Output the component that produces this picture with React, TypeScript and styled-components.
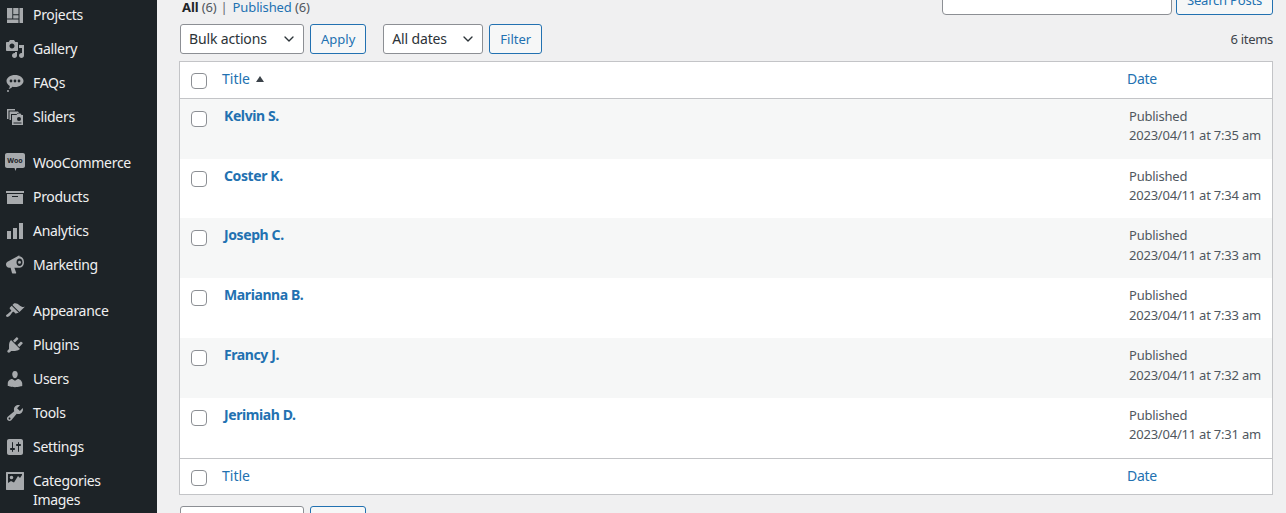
import React from 'react'
import styled, { createGlobalStyle } from 'styled-components'
import { ChevronDown } from 'lucide-react'

const FONT = '"Noto Sans", "Open Sans", sans-serif'

const GlobalStyle = createGlobalStyle`
  html, body {
    margin: 0;
    padding: 0;
    height: 513px;
    overflow: hidden;
    background: #f0f0f1;
    font-family: ${FONT};
  }
  * {
    box-sizing: border-box;
  }
`

const WooLabel = styled.text`
  font-family: ${FONT};
  font-size: 7px;
  font-weight: 700;
  fill: #1d2327;
`

type MenuItem = {
  label: string
  icon: React.ReactNode
}

const icons = {
  projects: (
    <path d="M2 3h5.300v10.500H2zM8.200 3h5.300v6.300H8.200zM8.200 10.200h5.300v3.300H8.200zM2 14.500h11.500V18H2zM14.500 3H18v15h-3.500z" />
  ),
  gallery: (
    <path d="M13 11V4c0-.55-.45-1-1-1h-1.670L9 1H5L3.670 3H2c-.55 0-1 .45-1 1v7c0 .55.45 1 1 1h10c.55 0 1-.45 1-1zM7 4.500c1.380 0 2.500 1.120 2.500 2.500S8.380 9.500 7 9.500 4.500 8.380 4.500 7 5.620 4.500 7 4.500zM14 6h5v10.500c0 1.380-1.120 2.500-2.500 2.500S14 17.880 14 16.500s1.120-2.500 2.500-2.500c.17 0 .34.02.5.05V9h-3V6zm-4 8.050V13h2v3.500c0 1.380-1.120 2.500-2.500 2.500S7 17.880 7 16.500 8.120 14 9.500 14c.17 0 .34.02.5.05z" />
  ),
  faqs: (
    <path
      fillRule="evenodd"
      d="M10 2c4.700 0 8.500 2.700 8.500 6s-3.800 6-8.500 6c-.9 0-1.800-.1-2.600-.3C6.200 15 5 15.800 3.600 16c.8-.9 1.200-2 1.200-3.100C2.900 11.800 1.500 10 1.500 8c0-3.300 3.800-6 8.500-6zM6 6.600a1.400 1.400 0 1 0 0 2.800 1.400 1.400 0 0 0 0-2.800zm4 0a1.400 1.400 0 1 0 0 2.800 1.400 1.400 0 0 0 0-2.800zm4 0a1.400 1.400 0 1 0 0 2.800 1.400 1.400 0 0 0 0-2.800zM3 17a1 1 0 1 1 0 2 1 1 0 0 1 0-2z"
    />
  ),
  sliders: (
    <path
      fillRule="evenodd"
      d="M2 2h8v1.500H3.500V12H2zM4.500 4.500H13l1 1.500H12v1H6v6H4.500zM7 8h4.500l1-1.500h3l1 1.500H18v10H7zm7 2a2 2 0 1 0 0 4 2 2 0 0 0 0-4zM8.500 15.500v1H16.500v-1z"
    />
  ),
  products: <path fillRule="evenodd" d="M19 4v2H1V4h18zM2 7h16v10H2V7zm11 3V9H7v1h6z" />,
  analytics: <path d="M18 18V2h-4v16h4zm-6 0V7H8v11h4zm-6 0v-8H2v8h4z" />,
  marketing: (
    <path
      fillRule="evenodd"
      d="M14.500 1.500c2.800 0 4.500 2.700 4.500 5.800 0 2.900-1.700 5.400-4.300 5.400H9.400l1.800 5.100c.1.300-.1.700-.5.700H7.600c-.3 0-.5-.2-.6-.5l-1.400-5.300H4.200c-1.800 0-3.200-1.500-3.200-3.300 0-1.500 1-2.800 2.400-3.200l8.800-4.800c.7-.6 1.500-.9 2.300-.9zm0 2c-1.800 0-3 1.700-3 3.800s1.200 3.800 3 3.800 3-1.700 3-3.800-1.200-3.800-3-3.800zm0 2.300a1.500 1.500 0 1 1 0 3 1.500 1.500 0 0 1 0-3z"
    />
  ),
  appearance: (
    <path d="M14.480 11.060L7.410 3.990l1.500-1.500c.5-.56 2.300-.47 3.510.32 1.210.8 1.430 1.280 2.910 2.100 1.180.64 2.450 1.260 4.450.85zm-.71.71L6.700 4.700 4.930 6.470c-.39.39-.39 1.020 0 1.410l1.060 1.060c.39.39.39 1.030 0 1.420-.6.6-1.430 1.150-2.210 1.690-.35.24-.7.53-1.010.84C1.430 13.230.4 14.750 1.400 15.600c.99 1.050 2.420 0 3.760-1.330.28-.28.55-.63.81-.98.58-.78 1.090-1.610 1.690-2.210.39-.39 1.030-.39 1.420 0l1.060 1.060c.39.39 1.020.39 1.410 0z" />
  ),
  plugins: (
    <path d="M13.110 4.360L9.870 7.600 8 5.730l3.240-3.240c.35-.34 1.050-.2 1.560.32.52.51.66 1.210.31 1.550zm-8 1.770l.91-1.120 9.010 9.010-1.190.84c-.71.71-2.630 1.160-3.820 1.160H6.140L4.900 17.260c-.59.59-1.540.59-2.120 0-.59-.58-.59-1.530 0-2.120l1.240-1.240v-3.880c0-1.130.4-3.190 1.090-3.890zm7.260 3.970l3.240-3.240c.34-.35 1.040-.21 1.550.31.52.51.66 1.210.31 1.550l-3.240 3.250z" />
  ),
  users: (
    <path d="M10 9.250c-2.270 0-2.730-3.440-2.730-3.440C7 4.020 7.820 2 9.970 2c2.160 0 2.980 2.020 2.710 3.810 0 0-.41 3.440-2.680 3.440zm0 2.570L12.720 10c2.390 0 4.520 2.330 4.520 4.530v2.490s-3.650 1.130-7.240 1.130c-3.650 0-7.240-1.130-7.240-1.130v-2.490c0-2.250 1.940-4.480 4.470-4.480z" />
  ),
  tools: (
    <path d="M16.680 9.770c-1.340 1.340-3.300 1.670-4.950.99l-5.410 6.520c-.99.99-2.590.99-3.580 0s-.99-2.590 0-3.570l6.520-5.420c-.68-1.650-.35-3.610.99-4.950 1.280-1.280 3.120-1.620 4.720-1.060l-2.890 2.890 2.820 2.820 2.860-2.870c.53 1.580.18 3.390-1.080 4.650zM3.810 16.210c.4.39 1.040.39 1.430 0 .4-.4.4-1.040 0-1.430-.39-.4-1.030-.4-1.430 0-.39.39-.39 1.030 0 1.430z" />
  ),
  settings: (
    <path
      fillRule="evenodd"
      d="M18 16V4c0-1.100-.9-2-2-2H4c-1.100 0-2 .9-2 2v12c0 1.100.9 2 2 2h12c1.100 0 2-.9 2-2zM8 11h1c.55 0 1 .45 1 1s-.45 1-1 1H8v1.500c0 .28-.22.5-.5.5s-.5-.22-.5-.5V13H6c-.55 0-1-.45-1-1s.45-1 1-1h1V5.500c0-.28.22-.5.5-.5s.5.22.5.5V11zm5-2h-1c-.55 0-1-.45-1-1s.45-1 1-1h1V5.500c0-.28.22-.5.5-.5s.5.22.5.5V7h1c.55 0 1 .45 1 1s-.45 1-1 1h-1v5.500c0 .28-.22.5-.5.5s-.5-.22-.5-.5V9z"
    />
  ),
  categories: (
    <path
      fillRule="evenodd"
      d="M1.500 1h17c.3 0 .5.2.5.5v17c0 .3-.2.5-.5.5h-17c-.3 0-.5-.2-.5-.5v-17c0-.3.2-.5.5-.5zM3 3v9l3-2 3 1.500L13 5l2 2 2-3V3H3zm3.500 1.700a1.800 1.800 0 1 1 0 3.600 1.800 1.800 0 0 1 0-3.600z"
    />
  ),
}

const groups: MenuItem[][] = [
  [
    { label: 'Projects', icon: icons.projects },
    { label: 'Gallery', icon: icons.gallery },
    { label: 'FAQs', icon: icons.faqs },
    { label: 'Sliders', icon: icons.sliders },
  ],
  [
    {
      label: 'WooCommerce',
      icon: (
        <>
          <path d="M2 0h16c1 0 2 .8 2 2v11c0 1.200-1 2-2 2h-6.500L10.500 18 9.500 15H2c-1 0-2-.8-2-2V2C0 .8 1 0 2 0z" />
          <WooLabel x="10" y="10" textAnchor="middle">
            Woo
          </WooLabel>
        </>
      ),
    },
    { label: 'Products', icon: icons.products },
    { label: 'Analytics', icon: icons.analytics },
    { label: 'Marketing', icon: icons.marketing },
  ],
  [
    { label: 'Appearance', icon: icons.appearance },
    { label: 'Plugins', icon: icons.plugins },
    { label: 'Users', icon: icons.users },
    { label: 'Tools', icon: icons.tools },
    { label: 'Settings', icon: icons.settings },
    { label: 'Categories Images', icon: icons.categories },
  ],
]

type Post = {
  name: string
  time: string
}

const posts: Post[] = [
  { name: 'Kelvin S.', time: '7:35 am' },
  { name: 'Coster K.', time: '7:34 am' },
  { name: 'Joseph C.', time: '7:33 am' },
  { name: 'Marianna B.', time: '7:33 am' },
  { name: 'Francy J.', time: '7:32 am' },
  { name: 'Jerimiah D.', time: '7:31 am' },
]

const App = () => {
  return (
    <Screen>
      <GlobalStyle />
      <Sidebar>
        {groups.map((group, i) => (
          <MenuGroup key={i}>
            {group.map((item) => (
              <MenuRow key={item.label}>
                <MenuIcon viewBox="0 0 20 20">{item.icon}</MenuIcon>
                <MenuLabel>{item.label}</MenuLabel>
              </MenuRow>
            ))}
          </MenuGroup>
        ))}
      </Sidebar>
      <Main>
        <TopRow>
          <Views>
            <strong>All</strong> <Count>(6)</Count>
            <Divider>|</Divider>
            <ViewLink>Published</ViewLink> <Count>(6)</Count>
          </Views>
          <SearchBox>
            <SearchInput />
            <SearchButton>Search Posts</SearchButton>
          </SearchBox>
        </TopRow>
        <Tablenav>
          <Dropdown $width={124}>
            Bulk actions
            <ChevronDown size={16} strokeWidth={2} />
          </Dropdown>
          <Button>Apply</Button>
          <Dropdown $width={100} $gap={11}>
            All dates
            <ChevronDown size={16} strokeWidth={2} />
          </Dropdown>
          <Button>Filter</Button>
          <ItemCount>6 items</ItemCount>
        </Tablenav>
        <PostsTable>
          <thead>
            <tr>
              <HeadCheckCell>
                <Checkbox />
              </HeadCheckCell>
              <HeadCell>
                <HeadLink>Title</HeadLink>
                <SortArrow />
              </HeadCell>
              <DateHeadCell>
                <HeadLink>Date</HeadLink>
              </DateHeadCell>
            </tr>
          </thead>
          <tbody>
            {posts.map((post) => (
              <PostRow key={post.name}>
                <CheckCell>
                  <Checkbox />
                </CheckCell>
                <TitleCell>
                  <PostName>{post.name}</PostName>
                </TitleCell>
                <DateCell>
                  Published
                  <br />
                  2023/04/11 at {post.time}
                </DateCell>
              </PostRow>
            ))}
          </tbody>
          <tfoot>
            <tr>
              <FootCheckCell>
                <Checkbox />
              </FootCheckCell>
              <FootCell>
                <HeadLink>Title</HeadLink>
              </FootCell>
              <DateFootCell>
                <HeadLink>Date</HeadLink>
              </DateFootCell>
            </tr>
          </tfoot>
        </PostsTable>
        <Tablenav $bottom>
          <Dropdown $width={124}>
            Bulk actions
            <ChevronDown size={16} strokeWidth={2} />
          </Dropdown>
          <Button>Apply</Button>
        </Tablenav>
      </Main>
    </Screen>
  )
}

const Screen = styled.div`
  display: flex;
  height: 513px;
  overflow: hidden;
  background: #f0f0f1;
  color: #3c434a;
`

const Sidebar = styled.nav`
  flex: 0 0 157px;
  height: 513px;
  background: #1d2327;
  overflow: hidden;
`

const MenuGroup = styled.div`
  margin-bottom: 12px;
  &:first-child {
    margin-top: -2px;
  }
`

const MenuRow = styled.div`
  display: flex;
  align-items: flex-start;
  min-height: 34px;
  padding: 7px 10px 0 5px;
  color: #f0f0f1;
`

const MenuIcon = styled.svg`
  flex: 0 0 20px;
  width: 20px;
  height: 20px;
  fill: #a7aaad;
`

const MenuLabel = styled.span`
  margin-left: 8px;
  font-size: 14px;
  line-height: 19px;
  letter-spacing: -0.3px;
`

const Main = styled.main`
  flex: 1;
  min-width: 0;
  padding: 0 13px 0 22px;
`

const TopRow = styled.div`
  display: flex;
  justify-content: space-between;
  align-items: flex-end;
  height: 31px;
  margin-top: -16px;
  margin-bottom: 9px;
`

const Views = styled.div`
  font-size: 13px;
  line-height: 16px;
  margin-left: 3px;
  letter-spacing: -0.12px;
  color: #1d2327;
`

const Count = styled.span`
  color: #50575e;
`

const Divider = styled.span`
  margin: 0 5px 0 4px;
  color: #646970;
`

const ViewLink = styled.span`
  color: #2271b1;
`

const SearchBox = styled.div`
  display: flex;
  gap: 4px;
  height: 30px;
`

const SearchInput = styled.div`
  width: 230px;
  background: #fff;
  border: 1px solid #8c8f94;
  border-radius: 4px;
`

const Tablenav = styled.div<{ $bottom?: boolean }>`
  display: flex;
  align-items: center;
  gap: 6px;
  height: 30px;
  margin-top: ${(p) => (p.$bottom ? '11px' : '0')};
  margin-bottom: 7px;
  padding-left: 1px;
  font-size: 13px;
`

const Dropdown = styled.div<{ $width: number; $gap?: number }>`
  display: flex;
  align-items: center;
  justify-content: space-between;
  width: ${(p) => p.$width}px;
  height: 30px;
  margin-left: ${(p) => p.$gap ?? 0}px;
  padding: 0 6px 2px 8px;
  background: #fff;
  border: 1px solid #8c8f94;
  border-radius: 3px;
  font-size: 14px;
  letter-spacing: -0.15px;
  color: #2c3338;

  svg {
    margin-top: 2px;
  }
`

const Button = styled.div`
  display: flex;
  align-items: center;
  justify-content: center;
  height: 30px;
  padding: 0 10px;
  background: #f6f7f7;
  border: 1px solid #2271b1;
  border-radius: 3px;
  font-size: 13px;
  color: #2271b1;
`

const SearchButton = styled(Button)`
  letter-spacing: -0.2px;
`

const ItemCount = styled.div`
  margin-left: auto;
  letter-spacing: -0.3px;
  color: #3c434a;
`

const PostsTable = styled.table`
  width: 100%;
  table-layout: fixed;
  border-collapse: separate;
  border-spacing: 0;
  background: #fff;
  border: 1px solid #c3c4c7;
`

const CheckCell = styled.td`
  width: 35px;
  padding: 12px 0 0 11px;
  vertical-align: top;
  text-align: left;
`

const HeadCheckCell = styled(CheckCell).attrs({ as: 'th' })`
  padding-top: 11px;
  border-bottom: 1px solid #c3c4c7;
`

const FootCheckCell = styled(CheckCell).attrs({ as: 'th' })`
  padding-top: 11px;
  border-top: 1px solid #c3c4c7;
`

const Checkbox = styled.span`
  display: block;
  width: 16px;
  height: 16px;
  background: #fff;
  border: 1px solid #8c8f94;
  border-radius: 4px;
`

const HeadCell = styled.th`
  height: 36.8px;
  padding: 0 0 2px 7px;
  text-align: left;
  font-weight: 400;
  font-size: 14px;
  border-bottom: 1px solid #c3c4c7;
`

const DateHeadCell = styled(HeadCell)`
  width: 152px;
  padding-left: 7px;
  letter-spacing: -0.3px;
`

const FootCell = styled(HeadCell)`
  height: 36px;
  border-bottom: 0;
  border-top: 1px solid #c3c4c7;
`

const DateFootCell = styled(FootCell)`
  width: 152px;
  padding-left: 7px;
  letter-spacing: -0.3px;
`

const HeadLink = styled.span`
  color: #2271b1;
`

const SortArrow = styled.span`
  display: inline-block;
  margin-left: 6px;
  border-left: 4px solid transparent;
  border-right: 4px solid transparent;
  border-bottom: 6px solid #3c434a;
  vertical-align: 2px;
`

const PostRow = styled.tr`
  height: 59.8px;
  &:nth-child(odd) {
    background: #f6f7f7;
  }
`

const TitleCell = styled.td`
  padding: 5px 0 0 9px;
  vertical-align: top;
`

const PostName = styled.span`
  font-size: 14px;
  line-height: 20px;
  font-weight: 700;
  letter-spacing: -0.4px;
  color: #2271b1;
`

const DateCell = styled.td`
  padding: 8px 0 0 9px;
  vertical-align: top;
  font-size: 13px;
  line-height: 19.6px;
  letter-spacing: -0.22px;
  color: #50575e;
  white-space: nowrap;
`

export default App
